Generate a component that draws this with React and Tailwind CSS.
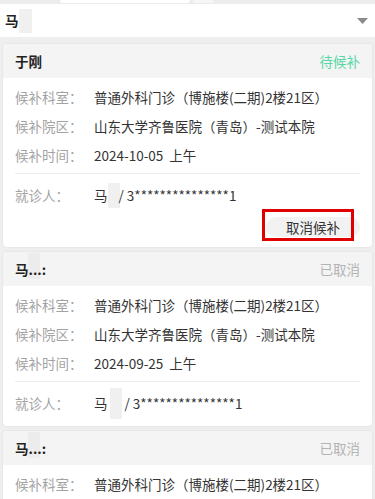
import React from "react";

const font = { fontFamily: '"Noto Sans CJK SC", "Noto Sans", sans-serif' };

const Mask = ({ className = "" }) => (
  <span className={`inline-block bg-[#f0f0f0] align-middle ${className}`} />
);

const Row = ({ label, children }) => (
  <div className="flex h-[29px] items-center text-[13.5px]">
    <span className="w-[79px] shrink-0 text-[#a3a3a3]">{label}</span>
    <span className="text-[#333] whitespace-nowrap">{children}</span>
  </div>
);

// redacted name in the card header: "马...:" with a grey block laid over the tail
const MaskedName = () => (
  <span className="relative inline-flex items-center">
    马
    <span className="relative">
      <span className="absolute left-[-1px] top-[-6px] h-[26px] w-[12px] bg-[#ececec]" />
      <span className="relative">...:</span>
    </span>
  </span>
);

const Card = ({ name, status, statusColor, date, patient, cancel }) => (
  <div className="mx-[3px] overflow-hidden rounded-[4px] bg-white shadow-[0_0_3px_rgba(0,0,0,0.08)]">
    {/* header */}
    <div className="flex h-[34px] items-center justify-between bg-[#f4f4f4] px-3 text-[13.5px]">
      <span className="font-bold text-[#222]">{name}</span>
      <span className={statusColor}>{status}</span>
    </div>
    <div className={`px-3 pt-[5px] ${cancel ? "pb-[10px]" : "pb-[8px]"}`}>
      <Row label="候补科室：">普通外科门诊（博施楼(二期)2楼21区）</Row>
      <Row label="候补院区：">山东大学齐鲁医院（青岛）-测试本院</Row>
      <Row label="候补时间：">{date}</Row>
      <div className="mt-[3px] border-t border-[#ececec]" />
      <div className="pt-[7px]">
        <Row label="就诊人：">{patient}</Row>
      </div>
      {cancel && (
        <div className="mt-[7px] flex justify-end">
          <div className="relative">
            <button className="flex h-[20px] w-[94px] items-center justify-center rounded-full bg-[#f2f2f2] text-[13.5px] text-[#333]">
              取消候补
            </button>
            {/* red highlight frame */}
            <div className="pointer-events-none absolute left-[-4px] top-[-8px] h-[32px] w-[92px] border-[3px] border-[#e00000]" />
          </div>
        </div>
      )}
    </div>
  </div>
);

const App = () => {
  return (
    <div className="h-[499px] w-[375px] overflow-hidden bg-[#efefef]" style={font}>
      {/* top strip */}
      <div className="flex h-[4px] bg-[#ececec]">
        <div className="ml-[60px] h-[3px] w-[130px] rounded-b-[3px] bg-white" />
        <div className="ml-[3px] h-[3px] w-[21px] rounded-b-[3px] bg-[#f6f6f6]" />
      </div>
      {/* patient selector */}
      <div className="flex h-[33px] items-center justify-between bg-white pl-[5px] pr-[7px]">
        <div className="flex items-center">
          <span className="text-[13.5px] font-bold text-[#222]">马</span>
          <Mask className="h-[24px] w-[13px]" />
        </div>
        <svg width="11" height="6" viewBox="0 0 11 6">
          <path d="M0 0 H11 L5.5 6 Z" fill="#8a8a8a" />
        </svg>
      </div>
      <div className="flex flex-col gap-[5px] pt-[7px]">
        <Card
          name="于刚"
          status="待候补"
          statusColor="text-[#55d8a6]"
          date={<>2024-10-05&nbsp;&nbsp;上午</>}
          patient={
            <span className="flex items-center">
              马<Mask className="h-[25px] w-[12px]" />
              <span className="ml-[-4px]">&nbsp;/ 3***************1</span>
            </span>
          }
          cancel
        />
        <Card
          name={<MaskedName />}
          status="已取消"
          statusColor="text-[#b3b3b3]"
          date={<>2024-09-25&nbsp;&nbsp;上午</>}
          patient={
            <span className="flex items-center">
              马<Mask className="ml-[2px] h-[31px] w-[12px]" />
              <span className="ml-[3px]">/ 3***************1</span>
            </span>
          }
        />
        <Card
          name={<MaskedName />}
          status="已取消"
          statusColor="text-[#b3b3b3]"
          date={<>2024-09-25&nbsp;&nbsp;上午</>}
          patient={<>马 / 3***************1</>}
        />
      </div>
    </div>
  );
};

export default App;
